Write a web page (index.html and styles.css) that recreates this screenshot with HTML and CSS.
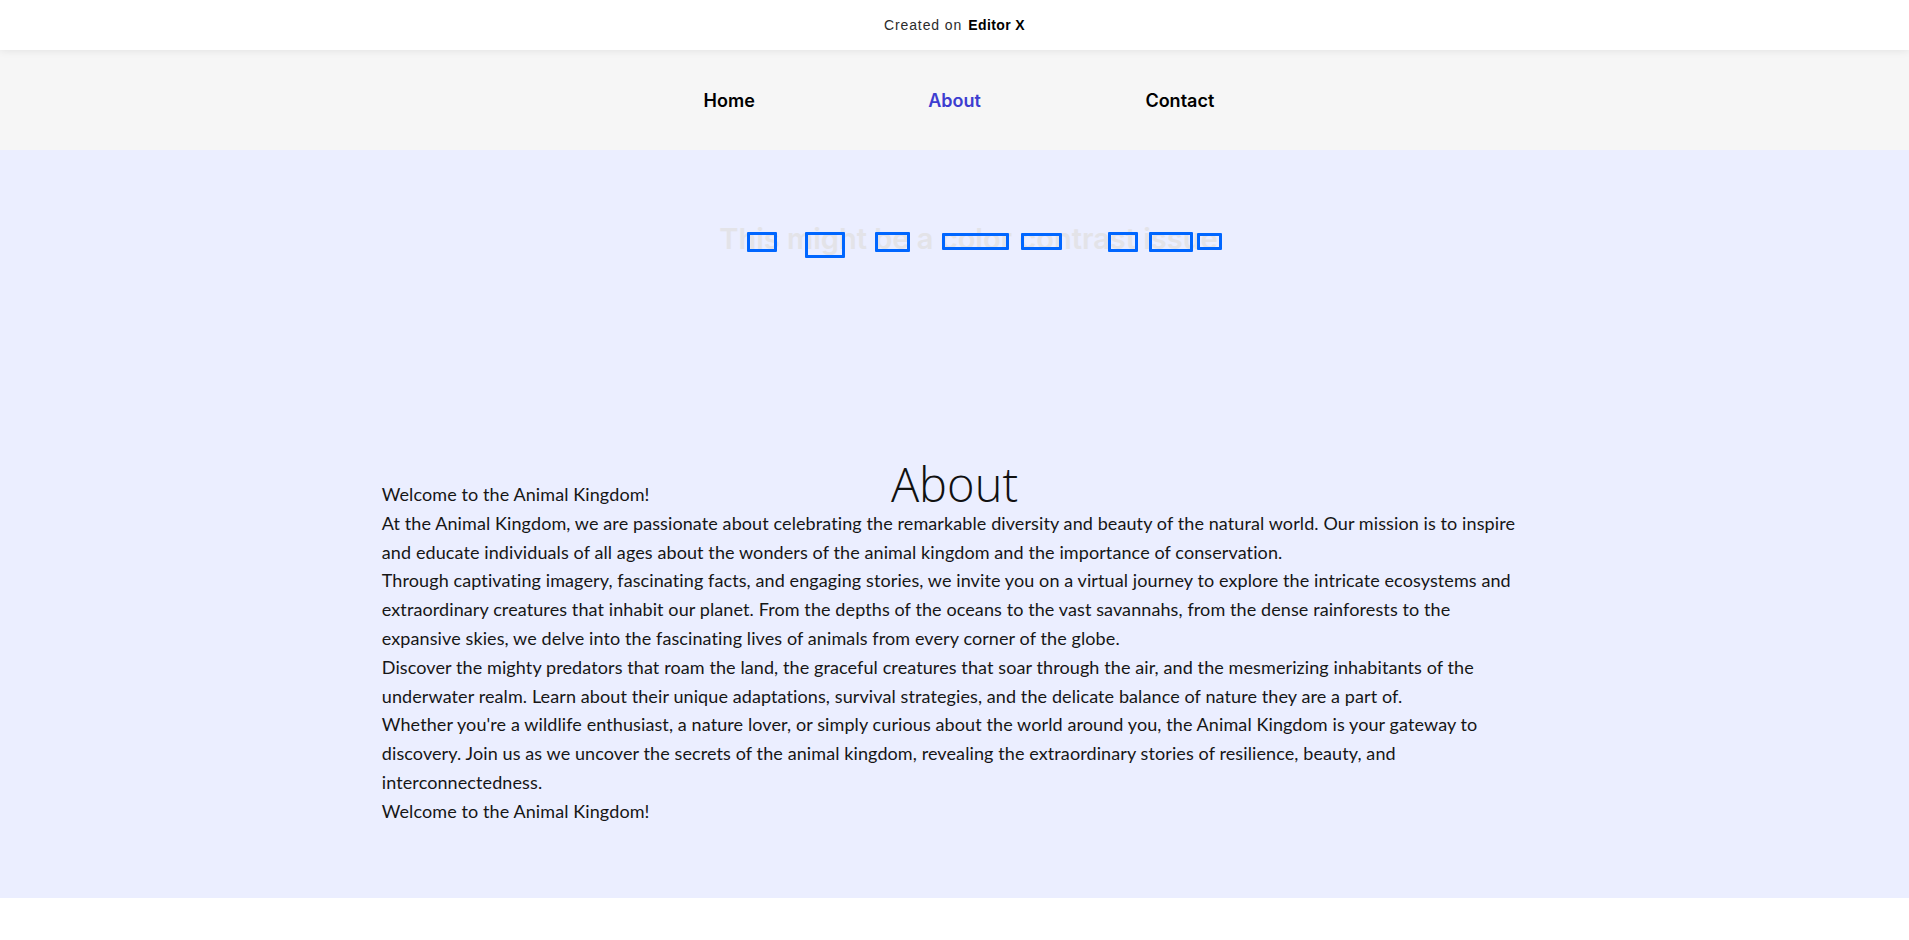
FILE: index.html
```html
<!DOCTYPE html>
<html lang="en">
<head>
<meta charset="utf-8">
<title>About</title>
<link rel="stylesheet" href="styles.css">
</head>
<body>
<header class="topbar">
  <span class="created">Created on</span> <b class="brand">Editor X</b>
</header>
<nav class="nav">
  <ul class="nav-list">
    <li><a class="nav-link" href="#">Home</a></li>
    <li><a class="nav-link active" href="#">About</a></li>
    <li><a class="nav-link" href="#">Contact</a></li>
  </ul>
</nav>
<main class="hero">
  <p class="contrast">This might be a color contrast issue</p>
  <span class="mark" style="left:calc(50% - 208px);top:82px;width:30px;height:20px"></span>
  <span class="mark" style="left:calc(50% - 150px);top:82px;width:40px;height:26px"></span>
  <span class="mark" style="left:calc(50% - 80px);top:82px;width:35px;height:20px"></span>
  <span class="mark" style="left:calc(50% - 13px);top:83px;width:67px;height:17px"></span>
  <span class="mark" style="left:calc(50% + 66px);top:83px;width:41px;height:17px"></span>
  <span class="mark" style="left:calc(50% + 153px);top:82px;width:30px;height:20px"></span>
  <span class="mark" style="left:calc(50% + 194px);top:82px;width:44px;height:20px"></span>
  <span class="mark" style="left:calc(50% + 242px);top:83px;width:25px;height:17px"></span>
  <section class="content">
    <h1 class="title">About</h1>
    <div class="text">
      <p>Welcome to the Animal Kingdom!</p>
      <p>At the Animal Kingdom, we are passionate about celebrating the remarkable diversity and beauty of the natural world. Our mission is to inspire and educate individuals of all ages about the wonders of the animal kingdom and the importance of conservation.</p>
      <p>Through captivating imagery, fascinating facts, and engaging stories, we invite you on a virtual journey to explore the intricate ecosystems and extraordinary creatures that inhabit our planet. From the depths of the oceans to the vast savannahs, from the dense rainforests to the expansive skies, we delve into the fascinating lives of animals from every corner of the globe.</p>
      <p>Discover the mighty predators that roam the land, the graceful creatures that soar through the air, and the mesmerizing inhabitants of the underwater realm. Learn about their unique adaptations, survival strategies, and the delicate balance of nature they are a part of.</p>
      <p>Whether you're a wildlife enthusiast, a nature lover, or simply curious about the world around you, the Animal Kingdom is your gateway to discovery. Join us as we uncover the secrets of the animal kingdom, revealing the extraordinary stories of resilience, beauty, and interconnectedness.</p>
      <p>Welcome to the Animal Kingdom!</p>
    </div>
  </section>
</main>
</body>
</html>
```
FILE: styles.css
```css
* { box-sizing: border-box; }
html, body { margin: 0; padding: 0; background: #ffffff; }
body { font-family: "Lato", "Liberation Sans", sans-serif; color: #161616; }

.topbar {
  height: 50px;
  display: flex;
  align-items: center;
  justify-content: center;
  gap: 6px;
  background: #ffffff;
  position: relative;
  z-index: 2;
  box-shadow: 0 1px 8px rgba(0, 0, 0, 0.08);
  font-family: "Liberation Sans", Arial, sans-serif;
  font-size: 14px;
}
.created { color: #2b2b2b; letter-spacing: 0.9px; }
.brand { color: #000; font-weight: 700; letter-spacing: 0.4px; }

.nav {
  height: 100px;
  background: #f6f6f6;
  display: flex;
  align-items: center;
}
.nav-list {
  list-style: none;
  margin: 0 auto;
  padding: 0;
  width: 676px;
  display: grid;
  grid-template-columns: repeat(3, 1fr);
}
.nav-list li { text-align: center; }
.nav-link {
  font-family: "Inter", "Noto Sans", sans-serif;
  font-weight: 600;
  font-size: 18px;
  color: #000;
  text-decoration: none;
}
.nav-link.active { color: #3d3dd0; }

.hero {
  position: relative;
  height: 748px;
  background: #ebeeff;
  padding-top: 71px;
}
.contrast {
  margin: 0;
  text-align: center;
  font-family: "Inter", "Noto Sans", sans-serif;
  font-weight: 600;
  font-size: 29px;
  line-height: 36px;
  color: #e3e3e8;
  transform: translateX(14px);
}
.mark {
  position: absolute;
  border: 3px solid #0066ff;
  border-radius: 1px;
}

.content {
  width: 60%;
  margin: 199px auto 0;
}
.title {
  margin: 0;
  text-align: center;
  font-family: "Open Sans", sans-serif;
  font-weight: 300;
  font-size: 47px;
  line-height: 56px;
  color: #111;
  position: relative;
  z-index: 1;
}
.text {
  margin-top: -32px;
  font-size: 18px;
  line-height: 28.8px;
  letter-spacing: 0.1px;
}
.text p { margin: 0; }
```
